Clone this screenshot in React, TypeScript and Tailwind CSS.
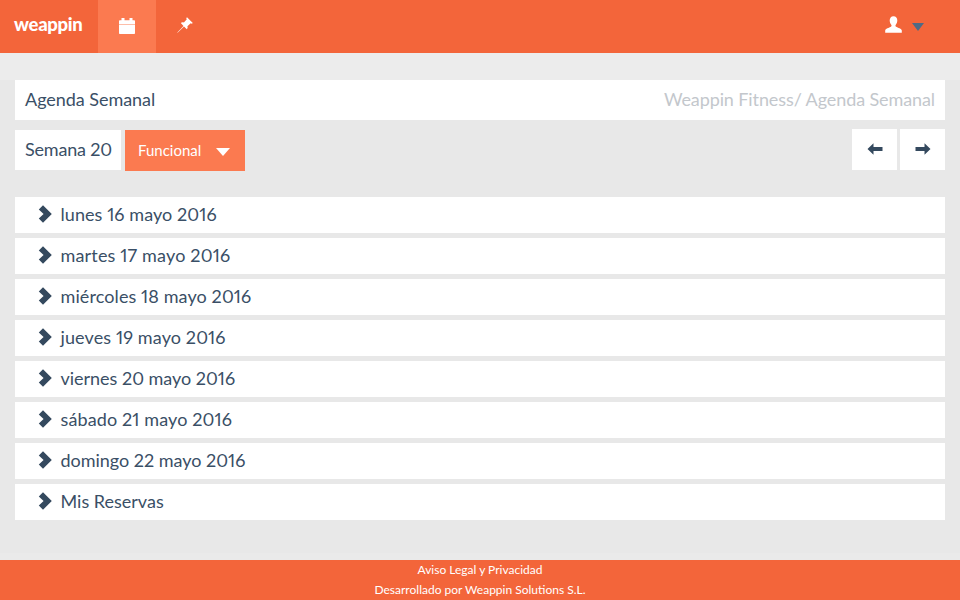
const days = [
  { label: "lunes 16 mayo 2016", tracking: "tracking-[0.070px]" },
  { label: "martes 17 mayo 2016", tracking: "tracking-[0.170px]" },
  { label: "miércoles 18 mayo 2016", tracking: "tracking-[0.100px]" },
  { label: "jueves 19 mayo 2016", tracking: "tracking-[0.120px]" },
  { label: "viernes 20 mayo 2016", tracking: "tracking-[-0.020px]" },
  { label: "sábado 21 mayo 2016", tracking: "tracking-[0.120px]" },
  { label: "domingo 22 mayo 2016", tracking: "tracking-[-0.020px]" },
  { label: "Mis Reservas", tracking: "tracking-[0px]" },
];

function Chevron() {
  return (
    <svg width="14" height="18" viewBox="0 0 14 18" className="shrink-0 mb-[1px]">
      <path d="M5 0.300 L13.800 9 L5 17.700 L0.800 13.500 L5.600 9 L0.800 4.500 Z" fill="#34495e" />
    </svg>
  );
}

function Arrow({ flip }: { flip?: boolean }) {
  return (
    <svg width="16" height="12" viewBox="0 0 16 12" className={flip ? "-scale-x-100" : ""}>
      <path d="M0.500 6 L6.500 0.300 V4 H15.500 V8 H6.500 V11.700 Z" fill="#34495e" />
    </svg>
  );
}

export default function App() {
  return (
    <div className="w-[960px] h-[600px] flex flex-col bg-[#e8e8e8] text-[#3a4f66] overflow-hidden proportional-nums font-['Lato',sans-serif]">
      <header className="h-[53px] shrink-0 flex bg-[#f3653a] text-white">
        <div className="w-[98px] pl-[14px] pb-[5px] flex items-center text-[18.500px] font-black tracking-[-0.300px] leading-none">
          weappin
        </div>
        <div className="w-[58px] pb-[1px] flex items-center justify-center bg-[#fb7a50]">
          <svg width="16" height="16" viewBox="0 0 16 16">
            <path d="M2.500 0h3v2.200h5V0h3v2.200h1.700c.5 0 .8.300.8.800v3.200H0V3c0-.5.300-.8.800-.8h1.700z M0 6.700h16v8.500c0 .5-.3.800-.8.800H.8c-.5 0-.8-.3-.8-.8z" fill="#fff" />
          </svg>
        </div>
        <div className="w-[58px] pb-[3px] flex items-center justify-center">
          <svg width="16" height="16" viewBox="0 0 16 16">
            <path d="M10 0.200 L15.800 6 L14.800 6.800 L13.700 6.300 L10.400 9.200 C10.900 10.400 10.600 11.400 9.800 12.200 L7 9.400 L0.600 15.800 L0.300 15.500 L6.500 8.900 L3.800 6.100 C4.600 5.300 5.700 5 6.900 5.600 L9.800 2.300 L9.200 1.200 Z" fill="#fff" />
          </svg>
        </div>
        <div className="ml-auto flex items-center pr-[36px] pb-[5px] gap-[10px]">
          <svg width="17" height="17" viewBox="0 0 17 17">
            <path d="M8.500 0.300 C11 0.300 12.300 2.200 12.300 4.600 C12.300 6.500 11.500 8 10.600 9 C10.300 9.400 10.400 10.300 11 10.700 C12.800 11.700 16.800 12.600 16.800 14.500 V16.700 H0.200 V14.500 C0.200 12.600 4.200 11.700 6 10.700 C6.600 10.300 6.700 9.400 6.400 9 C5.500 8 4.700 6.500 4.700 4.600 C4.700 2.300 6 0.300 8.500 0.300 Z" fill="#fff" />
          </svg>
          <div className="mt-[6px] w-0 h-0 border-l-[6px] border-r-[6px] border-t-[8px] border-l-transparent border-r-transparent border-t-[#4f6a85]" />
        </div>
      </header>

      <div className="h-[27px] shrink-0 bg-[#ececec]" />

      <main className="flex-1 flex flex-col px-[15px]">
        <div className="h-[40px] bg-white flex items-center justify-between px-[10px] pb-[2px] text-[18px] tracking-[-0.040px]">
          <span>Agenda Semanal</span>
          <span className="text-[#c3c7cc] tracking-[-0.100px]">Weappin Fitness/ Agenda Semanal</span>
        </div>

        <div className="mt-[9px] flex items-start">
          <div className="mt-[1px] w-[106px] h-[40px] bg-white flex items-center pl-[10px] pb-[2px] text-[18px] tracking-[-0.200px]">Semana 20</div>
          <div className="ml-[4px] mt-[1px] w-[120px] h-[41px] bg-[#fb7a50] text-white flex items-center pl-[13px] pb-[1px] text-[15px]">
            Funcional
            <span className="ml-[15px] mt-[3px] w-0 h-0 border-l-[7px] border-r-[7px] border-t-[8px] border-l-transparent border-r-transparent border-t-white" />
          </div>
          <div className="ml-auto flex gap-[3px]">
            <button className="w-[45px] h-[41px] bg-white flex items-center justify-center pb-[1px]"><Arrow /></button>
            <button className="w-[45px] h-[41px] bg-white flex items-center justify-center pb-[1px]"><Arrow flip /></button>
          </div>
        </div>

        <div className="mt-[26px] flex flex-col gap-[5px]">
          {days.map((d) => (
            <div key={d.label} className="h-[36px] bg-white flex items-center pl-[23px] pb-[2px] gap-[8.500px] text-[18px]">
              <Chevron />
              <span className={d.tracking}>{d.label}</span>
            </div>
          ))}
        </div>
      </main>

      <div className="h-[7px] shrink-0 bg-[#eaeaea]" />

      <footer className="h-[40px] shrink-0 bg-[#f3653a] text-white text-[12px] flex flex-col items-center leading-[20px]">
        <span>Aviso Legal y Privacidad</span>
        <span>Desarrollado por Weappin Solutions S.L.</span>
      </footer>
    </div>
  );
}
